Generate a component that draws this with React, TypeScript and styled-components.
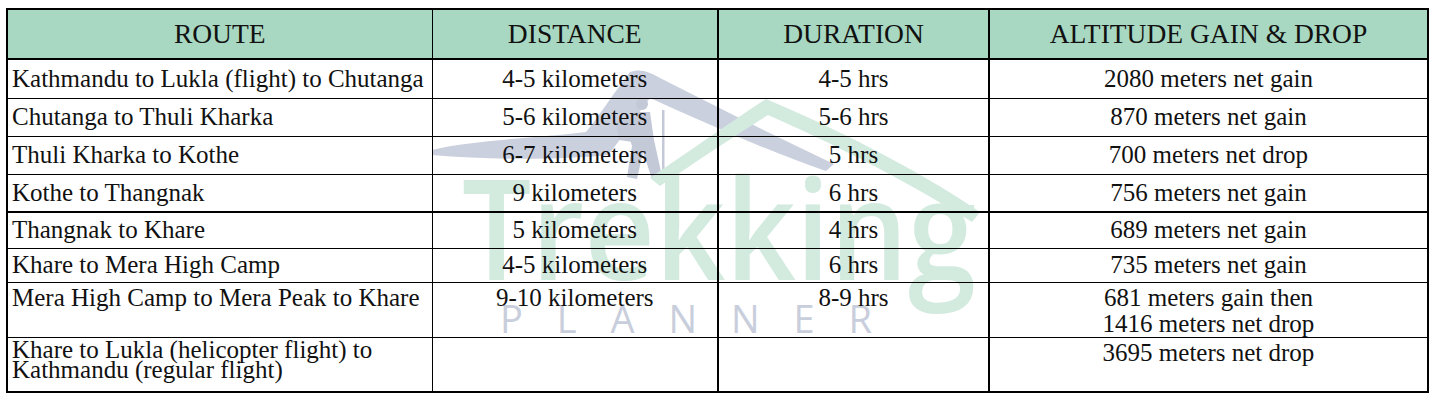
import React from "react";
import styled, { createGlobalStyle } from "styled-components";

interface Leg {
  route: string[];
  distance: string;
  duration: string;
  altitude: string[];
  height: number;
  top?: boolean;
}

const legs: Leg[] = [
  { route: ["Kathmandu to Lukla (flight) to Chutanga"], distance: "4-5 kilometers", duration: "4-5 hrs", altitude: ["2080 meters net gain"], height: 39 },
  { route: ["Chutanga to Thuli Kharka"], distance: "5-6 kilometers", duration: "5-6 hrs", altitude: ["870 meters net gain"], height: 38 },
  { route: ["Thuli Kharka to Kothe"], distance: "6-7 kilometers", duration: "5 hrs", altitude: ["700 meters net drop"], height: 38 },
  { route: ["Kothe to Thangnak"], distance: "9 kilometers", duration: "6 hrs", altitude: ["756 meters net gain"], height: 38 },
  { route: ["Thangnak to Khare"], distance: "5 kilometers", duration: "4 hrs", altitude: ["689 meters net gain"], height: 36 },
  { route: ["Khare to Mera High Camp"], distance: "4-5 kilometers", duration: "6 hrs", altitude: ["735 meters net gain"], height: 34 },
  { route: ["Mera High Camp to Mera Peak to Khare"], distance: "9-10 kilometers", duration: "8-9 hrs", altitude: ["681 meters gain then", "1416 meters net drop"], height: 54, top: true },
  { route: ["Khare to Lukla (helicopter flight) to", "Kathmandu (regular flight)"], distance: "", duration: "", altitude: ["3695 meters net drop"], height: 55, top: true },
];

const App: React.FC = () => {
  return (
    <>
      <GlobalStyle />
      <Page>
        <Watermark />
        <Table>
          <colgroup>
            <col style={{ width: 425 }} />
            <col style={{ width: 286 }} />
            <col style={{ width: 271 }} />
            <col style={{ width: 439 }} />
          </colgroup>
          <thead>
            <tr>
              <HeadCell>ROUTE</HeadCell>
              <HeadCell>DISTANCE</HeadCell>
              <HeadCell $heavy>DURATION</HeadCell>
              <HeadCell $heavy>ALTITUDE GAIN &amp; DROP</HeadCell>
            </tr>
          </thead>
          <tbody>
            {legs.map((leg, index) => (
              <Row key={index} $height={leg.height} $thickBottom={index === 3}>
                <RouteCell $top={leg.top}>
                  {leg.route.map((line) => (
                    <Line key={line} $tight={leg.route.length > 1}>{line}</Line>
                  ))}
                </RouteCell>
                <Cell $top={leg.top}>{leg.distance}</Cell>
                <Cell $top={leg.top} $heavy>{leg.duration}</Cell>
                <Cell $top={leg.top} $heavy>
                  {leg.altitude.map((line) => (
                    <Line key={line}>{line}</Line>
                  ))}
                </Cell>
              </Row>
            ))}
          </tbody>
        </Table>
      </Page>
    </>
  );
};

// faded logo that sits behind the body rows
const Watermark: React.FC = () => (
  <WatermarkSvg width="1433" height="401" viewBox="0 0 1433 401">
    <path
      d="M432,150 C470,140 540,138 586,132 C602,112 616,90 630,72 C640,68 650,72 660,78 C715,106 775,136 834,164 L826,171 C770,152 708,124 650,98 C636,116 622,138 608,155 C560,160 490,160 432,155 Z"
      fill="#cbd0de"
    />
    <g fill="#c4c9d8">
      <circle cx="642" cy="104" r="6" />
      <path d="M634,112 L650,112 L654,140 L662,176 L652,179 L643,152 L637,179 L627,177 L632,146 L627,130 Z" />
      <path d="M616,124 C624,114 634,116 636,124 L633,142 L619,140 Z" />
      <rect x="662" y="110" width="2.5" height="70" />
    </g>
    <path
      d="M650,178 C688,152 728,124 766,99 C830,126 912,166 980,212 L972,222 C905,180 830,142 768,115 C734,136 696,162 660,186 Z"
      fill="#d3eadf"
    />
    <TrekkingText x="462" y="280" textLength="514" lengthAdjust="spacingAndGlyphs">
      Trekking
    </TrekkingText>
    <PlannerText x="500" y="333" textLength="372" lengthAdjust="spacing">
      PLANNER
    </PlannerText>
  </WatermarkSvg>
);

const GlobalStyle = createGlobalStyle`
  body {
    margin: 0;
    background: #ffffff;
  }
`;

const Page = styled.div`
  position: relative;
  width: 1433px;
  height: 401px;
  padding: 8px 0 0 6px;
  box-sizing: border-box;
`;

const WatermarkSvg = styled.svg`
  position: absolute;
  left: 0;
  top: 0;
  pointer-events: none;
  z-index: 0;
`;

const TrekkingText = styled.text`
  font-family: "Open Sans", "Noto Sans", sans-serif;
  font-weight: 600;
  font-size: 140px;
  fill: #d3eadf;
`;

const PlannerText = styled.text`
  font-family: "Open Sans", "Noto Sans", sans-serif;
  font-weight: 400;
  font-size: 38px;
  fill: #c9cedc;
`;

const Table = styled.table`
  position: relative;
  z-index: 1;
  width: 1421px;
  table-layout: fixed;
  border-collapse: collapse;
  border: 2px solid #000;
  font-family: "Liberation Serif", "Times New Roman", serif;
  font-size: 25px;
  color: #111;
`;

const HeadCell = styled.th<{ $heavy?: boolean }>`
  height: 48px;
  padding: 0;
  background: #a8d8c2;
  font-family: "Liberation Serif", "Times New Roman", serif;
  font-weight: normal;
  font-size: 27.5px;
  text-align: center;
  vertical-align: middle;
  border: 1px solid #000;
  border-bottom: 2px solid #000;
  border-left: ${({ $heavy }) => ($heavy ? "2px" : "1px")} solid #000;
`;

const Row = styled.tr<{ $height: number; $thickBottom: boolean }>`
  height: ${({ $height }) => $height}px;
  border-bottom: ${({ $thickBottom }) => ($thickBottom ? "2px" : "1px")} solid #000;
`;

const Cell = styled.td<{ $top?: boolean; $heavy?: boolean }>`
  padding: ${({ $top }) => ($top ? "2px 4px 0" : "0 4px")};
  font-family: "Liberation Serif", "Times New Roman", serif;
  font-size: 25px;
  text-align: center;
  vertical-align: ${({ $top }) => ($top ? "top" : "middle")};
  border-left: ${({ $heavy }) => ($heavy ? "2px" : "1px")} solid #000;
  line-height: 26px;
  background: transparent;
`;

const RouteCell = styled(Cell)`
  text-align: left;
  padding-left: 4px;
  white-space: nowrap;
`;

const Line = styled.div<{ $tight?: boolean }>`
  line-height: ${({ $tight }) => ($tight ? "20px" : "26px")};
`;

export default App;
